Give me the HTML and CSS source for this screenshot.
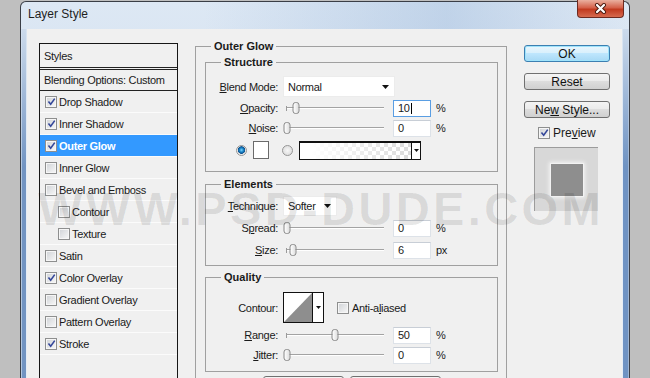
FILE: index.html
```html
<!DOCTYPE html>
<html lang="en">
<head>
  <meta charset="UTF-8">
  <meta name="viewport" content="width=device-width, initial-scale=1.0">
  <title>Layer Style</title>
  <link rel="stylesheet" href="styles.css">
</head>
<body>
  <div class="window">
    <div class="titlebar">
      <span class="title">Layer Style</span>
      <button class="close" type="button" aria-label="Close">
        <svg width="13" height="11" viewBox="0 0 13 11"><path d="M3 2l7 7M10 2l-7 7" stroke="#4a1a10" stroke-width="4" stroke-linecap="round"/><path d="M3 2l7 7M10 2l-7 7" stroke="#fff" stroke-width="2.2" stroke-linecap="round"/></svg>
      </button>
    </div>
    <div class="frame">
      <div class="edge edge-left"></div>
      <div class="dialog">
        <!-- список эффектов -->
        <div class="styles-list">
          <div class="list-head">Styles</div>
          <div class="list-blend">Blending Options: Custom</div>
          <div class="item"><span class="check on"><svg viewBox="0 0 10 10"><path d="M1.6 5l2.5 3L8.6 1.8"/></svg></span>Drop Shadow</div>
          <div class="item"><span class="check on"><svg viewBox="0 0 10 10"><path d="M1.6 5l2.5 3L8.6 1.8"/></svg></span>Inner Shadow</div>
          <div class="item active"><span class="check on"><svg viewBox="0 0 10 10"><path d="M1.6 5l2.5 3L8.6 1.8"/></svg></span>Outer Glow</div>
          <div class="item"><span class="check"></span>Inner Glow</div>
          <div class="item"><span class="check"></span>Bevel and Emboss</div>
          <div class="item indent"><span class="check"></span>Contour</div>
          <div class="item indent"><span class="check"></span>Texture</div>
          <div class="item"><span class="check"></span>Satin</div>
          <div class="item"><span class="check on"><svg viewBox="0 0 10 10"><path d="M1.6 5l2.5 3L8.6 1.8"/></svg></span>Color Overlay</div>
          <div class="item"><span class="check"></span>Gradient Overlay</div>
          <div class="item"><span class="check"></span>Pattern Overlay</div>
          <div class="item"><span class="check on"><svg viewBox="0 0 10 10"><path d="M1.6 5l2.5 3L8.6 1.8"/></svg></span>Stroke</div>
        </div>

        <!-- настройки Outer Glow -->
        <div class="settings">
          <div class="group">
            <div class="group-title">Outer Glow</div>

            <div class="group sub structure">
              <div class="group-title">Structure</div>
              <div class="row row-blend">
                <span class="label"><u>B</u>lend Mode:</span>
                <div class="select select-wide"><span>Normal</span><svg width="7" height="4" viewBox="0 0 7 4"><path d="M0 0h7L3.5 4z"/></svg></div>
              </div>
              <div class="row">
                <span class="label"><u>O</u>pacity:</span>
                <div class="slider"><span class="thumb" style="left: 10%"></span></div>
                <div class="num focus">10<span class="caret"></span></div>
                <span class="unit">%</span>
              </div>
              <div class="row">
                <span class="label"><u>N</u>oise:</span>
                <div class="slider"><span class="thumb" style="left: 1%"></span></div>
                <div class="num">0</div>
                <span class="unit">%</span>
              </div>
              <div class="row row-color">
                <span class="radio on"></span>
                <span class="swatch"></span>
                <span class="radio"></span>
                <div class="gradient">
                  <span class="grad-fill"></span>
                  <span class="grad-arrow"><svg width="5" height="3" viewBox="0 0 5 3"><path d="M0 0h5L2.5 3z"/></svg></span>
                </div>
              </div>
            </div>

            <div class="group sub elements">
              <div class="group-title">Elements</div>
              <div class="row row-tech">
                <span class="label"><u>T</u>echnique:</span>
                <div class="select select-small"><span>Softer</span><svg width="7" height="4" viewBox="0 0 7 4"><path d="M0 0h7L3.5 4z"/></svg></div>
              </div>
              <div class="row row-tall">
                <span class="label">S<u>p</u>read:</span>
                <div class="slider"><span class="thumb" style="left: 1%"></span></div>
                <div class="num">0</div>
                <span class="unit">%</span>
              </div>
              <div class="row row-tall">
                <span class="label"><u>S</u>ize:</span>
                <div class="slider"><span class="thumb" style="left: 7%"></span></div>
                <div class="num">6</div>
                <span class="unit">px</span>
              </div>
            </div>

            <div class="group sub quality">
              <div class="group-title">Quality</div>
              <div class="row row-contour">
                <span class="label">Contour:</span>
                <div class="contour">
                  <svg class="curve" width="28" height="29" viewBox="0 0 28 29"><path d="M0 29L28 0V29z" fill="#8e8e8e"/></svg>
                  <span class="contour-arrow"><svg width="5" height="3" viewBox="0 0 5 3"><path d="M0 0h5L2.5 3z"/></svg></span>
                </div>
                <span class="check anti"></span>
                <span class="anti-label">Anti-a<u>l</u>iased</span>
              </div>
              <div class="row">
                <span class="label"><u>R</u>ange:</span>
                <div class="slider"><span class="thumb" style="left: 50%"></span></div>
                <div class="num">50</div>
                <span class="unit">%</span>
              </div>
              <div class="row">
                <span class="label"><u>J</u>itter:</span>
                <div class="slider"><span class="thumb" style="left: 1%"></span></div>
                <div class="num">0</div>
                <span class="unit">%</span>
              </div>
            </div>

            <div class="bottom-buttons">
              <button class="btn btn-make" type="button"><span>Make Default</span></button>
              <button class="btn btn-restore" type="button"><span>Reset to Default</span></button>
            </div>
          </div>
        </div>

        <!-- кнопки справа -->
        <div class="side">
          <button class="btn btn-default" type="button"><span>OK</span></button>
          <button class="btn" type="button"><span>Reset</span></button>
          <button class="btn" type="button"><span>Ne<u>w</u> Style...</span></button>
          <div class="preview-row">
            <span class="check on"><svg viewBox="0 0 10 10"><path d="M1.6 5l2.5 3L8.6 1.8"/></svg></span>
            <span class="preview-label">Pre<u>v</u>iew</span>
          </div>
          <div class="preview">
            <div class="preview-square"></div>
          </div>
        </div>
      </div>
      <div class="edge edge-right"></div>
    </div>
  </div>
  <div class="watermark">WWW.PSD-DUDE.COM</div>
</body>
</html>
```

FILE: styles.css
```css
body {
  margin: 0;
  width: 650px;
  height: 378px;
  overflow: hidden;
  position: relative;
  background: #bfbfbf;
  font-family: "Liberation Sans", Arial, sans-serif;
  font-size: 11px;
  letter-spacing: -0.3px;
  color: #1a1a1a;
}
u {
  text-decoration: underline;
  text-underline-offset: 1px;
}
.window {
  margin: 1px 0 0 20px;
  width: 610px;
  height: 420px;
  box-sizing: border-box;
  border: 1px solid #3a3e46;
  border-bottom: 0;
  border-radius: 6px 6px 0 0;
  background:
    linear-gradient(to right, rgba(255,255,255,0) 30%, rgba(120,158,205,0.28) 70%, rgba(255,255,255,0) 100%),
    linear-gradient(#dde8f4, #cddcee 50%, #c2d4ea);
}
.titlebar {
  height: 27px;
  display: flex;
  align-items: flex-start;
}
.title {
  margin: 5px 0 0 7px;
  font-size: 12px;
  line-height: 14px;
  letter-spacing: 0;
  color: #1e1e1e;
}
.close {
  margin: -2px 5px 0 auto;
  width: 47px;
  height: 18px;
  padding: 0;
  border: 1px solid #6d2a20;
  border-top: 0;
  border-radius: 0 0 4px 4px;
  background: linear-gradient(#eab0a0, #d4614a 45%, #c13a20 55%, #d66a4f);
  display: flex;
  align-items: center;
  justify-content: center;
}
.frame {
  display: flex;
  height: 393px;
}
.edge {
  flex: none;
}
.edge-left {
  width: 6px;
  background:
    linear-gradient(rgba(214,226,240,0.9), rgba(214,226,240,0) 35%),
    linear-gradient(to right, #b3c7e0 0 1px, #7294c2 1px 5px, #e6edf6 5px);
}
.edge-right {
  width: 7px;
  background:
    linear-gradient(rgba(214,226,240,0.9), rgba(214,226,240,0) 35%),
    linear-gradient(to right, #e6edf6 0 1px, #6f93c3 1px 6px, #9fb5d2 6px);
}
.dialog {
  width: 595px;
  box-sizing: border-box;
  padding: 14px 12px 0;
  background: #f0f0f0;
  display: flex;
  align-items: flex-start;
}

/* список стилей */
.styles-list {
  flex: none;
  width: 139px;
  height: 400px;
  box-sizing: border-box;
  border: 1px solid #161616;
}
.list-head {
  height: 23px;
  padding-left: 4px;
  display: flex;
  align-items: center;
  border-bottom: 3px double #222;
}
.list-blend {
  height: 20px;
  padding-left: 4px;
  display: flex;
  align-items: center;
  border-bottom: 1px solid #222;
}
.item {
  height: 21px;
  padding-left: 5px;
  display: flex;
  align-items: center;
  border-bottom: 1px solid #fbfbfb;
}
.item.indent {
  padding-left: 18px;
}
.item.active {
  background: #3399ff;
  color: #fff;
  font-weight: bold;
}
.check {
  flex: none;
  width: 12px;
  height: 12px;
  margin-right: 2px;
  box-sizing: border-box;
  border: 1px solid #8e8f8f;
  box-shadow: inset 0 0 0 1px #f6f6f6;
  background: linear-gradient(135deg, #cfd2d6, #f8f8f8);
  display: flex;
  align-items: center;
  justify-content: center;
}
.check svg {
  width: 9px;
  height: 9px;
  fill: none;
  stroke: #34479a;
  stroke-width: 1.8;
}

/* группы */
.settings {
  flex: none;
  width: 312px;
  margin: 3px 0 0 17px;
}
.group {
  border: 1px solid #a0a0a0;
  padding: 0 8px 0 9px;
  height: 360px;
}
.group-title {
  width: fit-content;
  margin: -7px 0 0 6px;
  padding: 0 3px;
  line-height: 13px;
  background: #f0f0f0;
  font-weight: bold;
  letter-spacing: 0;
}
.sub {
  height: auto;
  padding: 0;
}
.sub > .group-title {
  margin-left: 15px;
}
.structure {
  margin-top: 9px;
  padding-bottom: 9px;
}
.elements {
  margin-top: 12px;
  padding-bottom: 4px;
}
.quality {
  margin-top: 11px;
  padding-bottom: 6px;
}
.row {
  height: 20px;
  display: flex;
  align-items: center;
}
.row-blend {
  margin-top: 6px;
  height: 23px;
}
.row-color {
  height: 24px;
  padding-left: 30px;
}
.row-tech {
  margin-top: 3px;
  height: 23px;
}
.row-tall {
  height: 22px;
}
.row-contour {
  margin-top: 6px;
  height: 35px;
}
.label {
  flex: none;
  width: 72px;
  margin-right: 5px;
  text-align: right;
}
.select {
  box-sizing: border-box;
  background: #fff;
  border: 1px solid #ececec;
  padding: 0 5px 0 4px;
  display: flex;
  align-items: center;
  justify-content: space-between;
}
.select svg {
  fill: #111;
}
.select-wide {
  width: 112px;
  height: 21px;
}
.select-small {
  width: 54px;
  height: 20px;
}
.slider {
  flex: none;
  position: relative;
  width: 98px;
  height: 12px;
  margin-left: 3px;
  background:
    linear-gradient(#9a9a9a, #9a9a9a) 0 50% / 1px 5px no-repeat,
    linear-gradient(#a3a3a3 50%, #ffffff 50%) 0 50% / 100% 2px no-repeat;
}
.thumb {
  position: absolute;
  top: 0;
  width: 7px;
  height: 12px;
  box-sizing: border-box;
  transform: translateX(-50%);
  border: 1px solid #8a8a8a;
  border-radius: 3px;
  background: linear-gradient(to right, #ffffff, #dedede);
}
.num {
  flex: none;
  width: 38px;
  height: 17px;
  margin-left: 9px;
  box-sizing: border-box;
  padding-left: 4px;
  line-height: 15px;
  background: #fff;
  border: 1px solid #dde2e8;
  border-top-color: #c8ced6;
  display: flex;
  align-items: center;
}
.num.focus {
  border-color: #5a9ee3;
}
.caret {
  width: 0;
  height: 11px;
  margin-left: 1px;
  border-left: 1px solid #000;
}
.unit {
  margin-left: 5px;
}
.radio {
  flex: none;
  width: 11px;
  height: 11px;
  box-sizing: border-box;
  border: 1px solid #959595;
  border-radius: 50%;
  background: radial-gradient(circle, #f7f7f7, #d6d6d6);
}
.radio.on {
  background: radial-gradient(circle at 50% 45%, #7fd6ff 0, #1b85c8 2px, #0c4f8c 3.5px, #e2e2e2 4px, #f6f6f6 5px);
}
.swatch {
  flex: none;
  width: 16px;
  height: 18px;
  margin: 0 13px 0 6px;
  box-sizing: border-box;
  border: 1px solid #6a6a6a;
  background: #fff;
}
.gradient {
  flex: none;
  width: 122px;
  height: 19px;
  margin-left: 6px;
  box-sizing: border-box;
  border: 1px solid #111;
  border-top-width: 2px;
  display: flex;
}
.grad-fill {
  flex: 1;
  background:
    linear-gradient(to right, #fff 10%, rgba(255,255,255,0.3)),
    conic-gradient(#cccccc 25%, #ffffff 0 50%, #cccccc 0 75%, #ffffff 0);
  background-size: 100% 100%, 8px 8px;
}
.grad-arrow {
  width: 8px;
  border-left: 1px solid #111;
  background: #fff;
  display: flex;
  align-items: center;
  justify-content: center;
}
.grad-arrow svg,
.contour-arrow svg {
  fill: #111;
}
.contour {
  flex: none;
  width: 41px;
  height: 31px;
  box-sizing: border-box;
  border: 1px solid #111;
  background: #fff;
  display: flex;
}
.curve {
  display: block;
}
.contour-arrow {
  flex: 1;
  border-left: 1px solid #111;
  display: flex;
  align-items: center;
  justify-content: center;
}
.check.anti {
  margin-left: 13px;
  margin-right: 3px;
}
.bottom-buttons {
  margin-top: 4px;
  display: flex;
  justify-content: center;
  gap: 6px;
}
.btn-make {
  width: 81px;
}
.btn-restore {
  width: 91px;
}

/* правая колонка */
.side {
  flex: none;
  width: 86px;
  margin-left: 17px;
  padding-top: 2px;
  display: flex;
  flex-direction: column;
}
.btn {
  height: 17px;
  padding: 0;
  box-sizing: border-box;
  border: 1px solid #707070;
  border-radius: 3px;
  background: linear-gradient(#f4f4f4, #ebebeb 45%, #dddddd 50%, #d0d0d0);
  font-family: "Liberation Sans", Arial, sans-serif;
  font-size: 12px;
  letter-spacing: 0;
  color: #111;
  display: flex;
  align-items: center;
  justify-content: center;
}
.side .btn + .btn {
  margin-top: 11px;
}
.btn-default {
  border-color: #3c7fb1;
  box-shadow: inset 0 0 0 1px #9fe3fb;
  background: linear-gradient(#eaf6fd, #d9f0fc 45%, #bee6fd 50%, #a7d9f5);
}
.preview-row {
  margin: 8px 0 0 14px;
  height: 13px;
  display: flex;
  align-items: center;
}
.preview-label {
  margin-left: 1px;
  font-size: 12px;
  letter-spacing: 0;
}
.preview {
  margin: 8px 0 0 10px;
  width: 64px;
  height: 64px;
  box-sizing: border-box;
  border-top: 1px solid #9c9c9c;
  border-left: 1px solid #9c9c9c;
  background: #d8d8d8;
  display: flex;
  align-items: center;
  justify-content: center;
}
.preview-square {
  width: 32px;
  height: 32px;
  background: #8e8e8e;
  box-shadow: 0 0 0 1px #f2f2f2, 0 0 4px 2px rgba(255, 255, 255, 0.7);
}

/* водяной знак поверх окна */
.watermark {
  position: absolute;
  left: 38px;
  top: 185px;
  font-size: 47px;
  line-height: 47px;
  font-weight: bold;
  letter-spacing: 3.4px;
  color: rgba(0, 0, 0, 0.1);
  pointer-events: none;
  white-space: nowrap;
}
```
